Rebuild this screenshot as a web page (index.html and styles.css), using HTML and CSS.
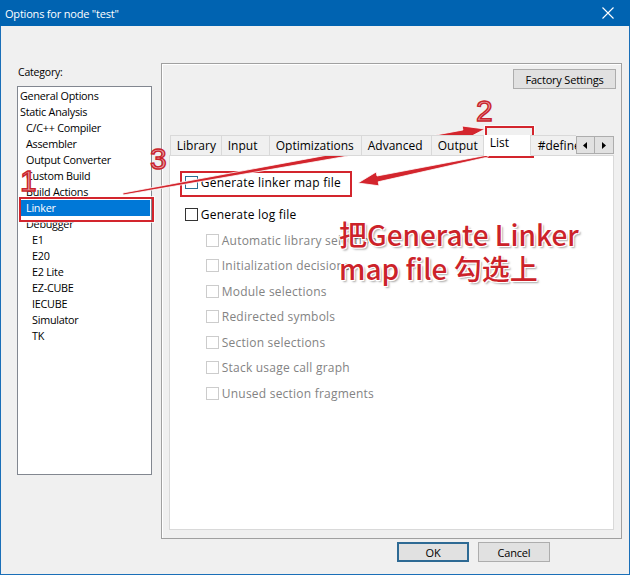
FILE: index.html
```html
<!DOCTYPE html>
<html>
<head>
<meta charset="utf-8">
<link rel="stylesheet" href="styles.css">
</head>
<body>
<div class="window">
  <div class="titlebar">
    <span class="title">Options for node "test"</span>
    <svg class="close" width="12" height="12" viewBox="0 0 12 12"><path d="M0.5 0.5 L11.5 11.5 M11.5 0.5 L0.5 11.5" stroke="#fff" stroke-width="1.1" fill="none"/></svg>
  </div>
  <div class="body">
    <div class="main">
      <div class="left">
        <div class="label">Category:</div>
        <ul class="listbox">
          <li class="l0">General Options</li>
          <li class="l0">Static Analysis</li>
          <li class="l1">C/C++ Compiler</li>
          <li class="l1">Assembler</li>
          <li class="l1">Output Converter</li>
          <li class="l1">Custom Build</li>
          <li class="l1">Build Actions</li>
          <li class="l1 selected">Linker</li>
          <li class="l1">Debugger</li>
          <li class="l2">E1</li>
          <li class="l2">E20</li>
          <li class="l2">E2 Lite</li>
          <li class="l2">EZ-CUBE</li>
          <li class="l2">IECUBE</li>
          <li class="l2">Simulator</li>
          <li class="l2">TK</li>
        </ul>
      </div>
      <div class="frame">
        <div class="frame-top"><div class="btn factory">Factory Settings</div></div>
        <div class="tabbar">
          <div class="tabs">
            <div class="tab t-library">Library</div>
            <div class="tab t-input">Input</div>
            <div class="tab t-opt">Optimizations</div>
            <div class="tab t-adv">Advanced</div>
            <div class="tab t-out">Output</div>
            <div class="tab t-list active">List</div>
            <div class="tab t-def">#define</div>
          </div>
          <div class="scroll">
            <div class="sbtn"><svg width="4" height="7" viewBox="0 0 4 7"><path d="M4 0 L0 3.5 L4 7 Z" fill="#000"/></svg></div>
            <div class="sbtn"><svg width="4" height="7" viewBox="0 0 4 7"><path d="M0 0 L4 3.5 L0 7 Z" fill="#000"/></svg></div>
          </div>
        </div>
        <div class="page">
          <div class="row first"><span class="cb hover"></span><span>Generate linker map file</span></div>
          <div class="row"><span class="cb"></span><span>Generate log file</span></div>
          <div class="row sub dis"><span class="cb"></span><span>Automatic library selection</span></div>
          <div class="row sub dis"><span class="cb"></span><span>Initialization decisions</span></div>
          <div class="row sub dis"><span class="cb"></span><span>Module selections</span></div>
          <div class="row sub dis"><span class="cb"></span><span>Redirected symbols</span></div>
          <div class="row sub dis"><span class="cb"></span><span>Section selections</span></div>
          <div class="row sub dis"><span class="cb"></span><span>Stack usage call graph</span></div>
          <div class="row sub dis"><span class="cb"></span><span>Unused section fragments</span></div>
        </div>
      </div>
    </div>
    <div class="footer">
      <div class="btn ok">OK</div>
      <div class="btn cancel">Cancel</div>
    </div>
  </div>

  <div class="annot box box-linker"></div>
  <div class="annot box box-list"></div>
  <div class="annot box box-gen"></div>
  <svg class="annot arrows" width="630" height="575" viewBox="0 0 630 575">
    <g fill="#d3252d" stroke="#fff" stroke-width="0.8" stroke-linejoin="round">
      <polygon points="122.2,195.0 462.9,135.9 463.6,139.8 484,129 461.2,126.0 461.9,130.0 121.8,193.0"/>
      <polygon points="487.2,157.0 377.2,181.8 378.0,185.8 357,183 375.2,172.0 376.0,176.0 486.8,155.0"/>
    </g>
  </svg>
  <div class="annot num n1">1</div>
  <div class="annot num n2">2</div>
  <div class="annot num n3">3</div>
  <div class="annot note">把Generate Linker<br>map file 勾选上</div>
</div>
</body>
</html>
```

FILE: styles.css
```css
* { box-sizing: border-box; }
html, body { margin: 0; padding: 0; }
body {
  width: 630px;
  height: 575px;
  overflow: hidden;
  font-family: "Open Sans", "Noto Sans", sans-serif;
  font-size: 12px;
  color: #000;
}
.window {
  position: relative;
  width: 630px;
  height: 575px;
  background: #f0f0f0;
  border: 1px solid #1a6fb8;
  border-top: none;
  display: flex;
  flex-direction: column;
}
.titlebar {
  height: 26px;
  margin: 0 -1px;
  background: #0063b1;
  color: #fff;
  display: flex;
  align-items: center;
  justify-content: space-between;
  padding: 0 16px 0 5px;
  font-size: 11px;
}
.title { letter-spacing: -0.2px; }
.close { display: block; }
.body {
  flex: 1;
  display: flex;
  flex-direction: column;
}
.main {
  display: flex;
  padding: 37px 7px 0 16px;
  gap: 9px;
}
.left { width: 135px; padding-top: 1px; }
.label { line-height: 16px; height: 16px; margin-bottom: 6px; padding-left: 1px; font-size: 10.5px; letter-spacing: -0.2px; }
.listbox {
  list-style: none;
  margin: 0;
  padding: 1px 1px;
  height: 389px;
  background: #fff;
  border: 1px solid #828790;
  font-size: 10.8px;
  letter-spacing: -0.25px;
}
.listbox li {
  height: 16px;
  line-height: 16px;
  white-space: nowrap;
}
.l0 { padding-left: 1px; }
.l1 { padding-left: 7px; }
.l2 { padding-left: 13px; }
.listbox li.selected { background: #0078d7; color: #fff; }

.frame {
  width: 462px;
  height: 476px;
  border: 1px solid #a0a0a0;
  box-shadow: inset 1px 1px 0 #fff;
  padding: 5px 7px 8px 7px;
  display: flex;
  flex-direction: column;
}
.frame-top { display: flex; justify-content: flex-end; margin-right: -2px; }
.btn {
  background: #e1e1e1;
  border: 1px solid #adadad;
  height: 20px;
  display: flex;
  align-items: center;
  justify-content: center;
  font-size: 11px;
  letter-spacing: -0.2px;
}
.factory { width: 103px; }
.tabbar {
  margin-top: 46px;
  display: flex;
  align-items: flex-start;
  height: 21px;
  position: relative;
  z-index: 1;
}
.tabs {
  display: flex;
  width: 407px;
  overflow: hidden;
  height: 21px;
  padding-left: 1px;
}
.tab {
  flex: none;
  height: 21px;
  line-height: 19px;
  border: 1px solid #d9d9d9;
  border-left: none;
  background: #f0f0f0;
  padding-left: 6px;
  white-space: nowrap;
}
.tab:first-child { border-left: 1px solid #d9d9d9; }
.t-library { width: 52px; }
.t-input { width: 48px; }
.t-opt { width: 92px; }
.t-adv { width: 70px; }
.t-out { width: 52px; }
.t-list { width: 47px; }
.t-def { width: 60px; padding-left: 7px; }
.tab.active {
  background: #fff;
  height: 24px;
  margin-top: -3px;
  border-bottom-color: #fff;
  line-height: 20px;
}
.scroll { display: flex; margin-top: 1px; }
.sbtn {
  width: 19px;
  height: 18px;
  background: #e1e1e1;
  border: 1px solid #adadad;
  display: flex;
  align-items: center;
  justify-content: center;
}
.sbtn + .sbtn { border-left: none; }
.page {
  flex: 1;
  margin-top: -1px;
  background: #fff;
  border: 1px solid #d9d9d9;
  padding: 14px 0 0 15px;
  letter-spacing: 0.22px;
}
.row {
  height: 25.5px;
  display: flex;
  align-items: center;
  white-space: nowrap;
}
.row.first { margin-bottom: 6.5px; }
.row.sub { padding-left: 21px; }
.cb {
  width: 13px;
  height: 13px;
  border: 1px solid #333;
  background: #fff;
  margin-right: 3px;
  flex: none;
}
.cb.hover { border-color: #2a6f93; }
.dis { color: #838383; }
.dis .cb { border-color: #cccccc; }

.footer {
  display: flex;
  padding: 3px 0 0 396px;
  gap: 9px;
}
.ok { width: 72px; border: 2px solid #2e6a94; }
.cancel { width: 72px; }

.annot { position: absolute; }
.box { border: 2px solid #d3252d; box-shadow: 0 0 0 1px rgba(255,255,255,.7); }
.box-linker { left: 18px; top: 197px; width: 135px; height: 25px; }
.box-list { left: 484px; top: 126px; width: 49px; height: 32px; }
.box-gen { left: 179px; top: 171px; width: 172px; height: 26px; }
.arrows { left: 0; top: 0; }
.num {
  font-family: "Liberation Sans", sans-serif;
  font-size: 30px;
  line-height: 30px;
  color: #eaa1a5;
  -webkit-text-stroke: 1.4px #c9232c;
}
.n1 { left: 19px; top: 166px; }
.n2 { left: 475px; top: 96px; }
.n3 { left: 149px; top: 144px; }
.note {
  left: 338px;
  top: 217px;
  font-family: "Noto Sans CJK SC", "Noto Sans", sans-serif;
  font-size: 28px;
  font-weight: 500;
  line-height: 34px;
  color: #cc2229;
  white-space: nowrap;
  text-shadow: -1px -1px 0 #fff, 1px -1px 0 #fff, -1px 1px 0 #fff, 1px 1px 0 #fff, 2px 2px 2px rgba(0,0,0,.35);
}
```
